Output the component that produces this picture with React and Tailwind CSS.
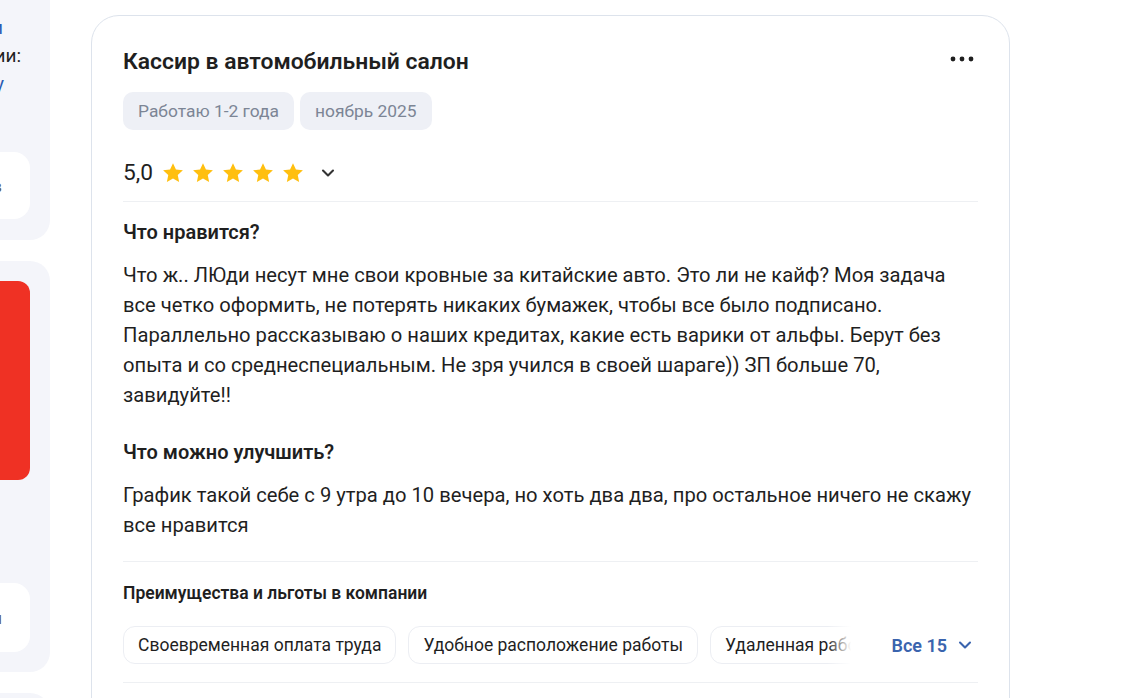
import { ChevronDown } from 'lucide-react';

const tags = ['Работаю 1-2 года', 'ноябрь 2025'];
const perks = ['Своевременная оплата труда', 'Удобное расположение работы', 'Удаленная работа', 'ДМС'];

function Star() {
  return (
    <svg viewBox="0 0 24 24" className="w-6 h-6" fill="#ffbf0f">
      <path d="M12 2.2l2.95 6.35 6.95.8-5.15 4.75 1.38 6.87L12 17.5l-6.13 3.47 1.38-6.87L2.1 9.35l6.95-.8z" />
    </svg>
  );
}

function EdgeLine({ w, blue, children }) {
  return (
    <div className={`flex justify-end whitespace-nowrap ${w} ${blue ? 'text-[#2a5bb3]' : 'text-[#1f1f1f]'}`}>
      {children}
    </div>
  );
}

function Sidebar() {
  return (
    <div className="w-[50px] shrink-0 flex flex-col gap-[21px] overflow-hidden text-[19px] leading-[28px]">
      <div className="shrink-0 -mt-[40px] h-[280px] bg-[#f4f5fa] rounded-r-[20px] flex flex-col pt-[54px] pb-[21px]">
        <EdgeLine w="w-[3px]" blue>Вакансии компании</EdgeLine>
        <EdgeLine w="w-[21px]">Оценки по категории:</EdgeLine>
        <EdgeLine w="w-[4px]" blue>Пишите отзыв сразу</EdgeLine>
        <div className="mt-auto h-[67px] w-[30px] bg-white rounded-r-[16px] flex items-center">
          <EdgeLine w="w-[2px]">
            <span className="text-[#5c5c5c] text-[17px]">Отзывы сотрудников</span>
          </EdgeLine>
        </div>
      </div>
      <div className="shrink-0 h-[411px] bg-[#f4f5fa] rounded-r-[20px] flex flex-col py-[20px]">
        <div className="h-[199px] w-[30px] bg-[#ef3124] rounded-r-[12px]" />
        <div className="mt-auto h-[69px] w-[30px] bg-white rounded-r-[16px] flex items-center">
          <EdgeLine w="w-[2px]">
            <span className="text-[#5c5c5c] text-[17px]">Написать отзывн</span>
          </EdgeLine>
        </div>
      </div>
      <div className="shrink-0 h-[200px] bg-[#f4f5fa] rounded-r-[20px]" />
    </div>
  );
}

function Section({ title, children }) {
  return (
    <>
      <h3 className="text-[20px] leading-[24px] font-semibold text-[#1f1f1f]">{title}</h3>
      <p className="mt-[16px] text-[20.2px] leading-[30px] text-[#1f1f1f]">{children}</p>
    </>
  );
}

function ReviewCard() {
  return (
    <div className="mt-[15px] w-[919px] shrink-0 self-start border border-[#dde3ec] rounded-[28px] px-[31px] pt-[32px] pb-[40px] bg-white">
      <div className="flex items-center justify-between">
        <h2 className="text-[22.9px] leading-[28px] font-semibold text-[#1f1f1f]">Кассир в автомобильный салон</h2>
        <svg viewBox="0 0 24 6" className="w-[24px] h-[6px] mr-[4px] -mt-[7px]" fill="#1f1f1f">
          <circle cx="3" cy="3" r="2.4" />
          <circle cx="12" cy="3" r="2.4" />
          <circle cx="21" cy="3" r="2.4" />
        </svg>
      </div>

      <div className="mt-[16px] flex gap-[6px]">
        {tags.map((t) => (
          <span key={t} className="h-[38px] px-[15px] flex items-center rounded-[10px] bg-[#eef0f6] text-[17.4px] text-[#7c8595]">
            {t}
          </span>
        ))}
      </div>

      <div className="mt-[23px] h-[40px] flex items-center">
        <span className="text-[22.7px] text-[#1f1f1f]">5,0</span>
        <div className="ml-[8px] flex gap-[6px]">
          <Star />
          <Star />
          <Star />
          <Star />
          <Star />
        </div>
        <ChevronDown className="ml-[13px] w-5 h-5 text-[#333]" strokeWidth={2.5} />
      </div>

      <div className="mt-[8px] h-px bg-[#eef0f3]" />

      <div className="mt-[18px]">
        <Section title="Что нравится?">
          Что ж.. ЛЮди несут мне свои кровные за китайские авто. Это ли не кайф? Моя задача все четко оформить,
          не потерять никаких бумажек, чтобы все было подписано. Параллельно рассказываю о наших кредитах, какие
          есть варики от альфы. Берут без опыта и со среднеспециальным. Не зря учился в своей шараге)) ЗП больше
          70, завидуйте!!
        </Section>
      </div>
      <div className="mt-[30px]">
        <Section title="Что можно улучшить?">
          График такой себе с 9 утра до 10 вечера, но хоть два два, про остальное ничего не скажу все нравится
        </Section>
      </div>

      <div className="mt-[21px] h-px bg-[#eef0f3]" />

      <h4 className="mt-[20px] text-[17.5px] leading-[22px] font-semibold text-[#1f1f1f]">
        Преимущества и льготы в компании
      </h4>

      <div className="mt-[22px] flex items-center">
        <div className="relative w-[728px] overflow-hidden">
          <div className="flex gap-[12px]">
            {perks.map((p) => (
              <span
                key={p}
                className="shrink-0 h-[38px] px-[14px] flex items-center rounded-[12px] border border-[#eceef3] text-[17.5px] text-[#1f1f1f]"
              >
                {p}
              </span>
            ))}
          </div>
          <div className="absolute right-0 top-0 h-full w-[24px] bg-gradient-to-l from-white to-white/0" />
        </div>
        <button className="ml-auto mr-[3px] flex items-center gap-[8px] text-[18px] font-semibold text-[#3a64ae]">
          Все 15
          <ChevronDown className="w-5 h-5" strokeWidth={2.5} />
        </button>
      </div>

      <div className="mt-[18px] h-px bg-[#eef0f3]" />
      <div className="h-[80px]" />
    </div>
  );
}

export default function App() {
  return (
    <div className="w-[1142px] h-[698px] overflow-hidden bg-white flex gap-[41px] font-['Roboto',sans-serif]">
      <Sidebar />
      <ReviewCard />
    </div>
  );
}
